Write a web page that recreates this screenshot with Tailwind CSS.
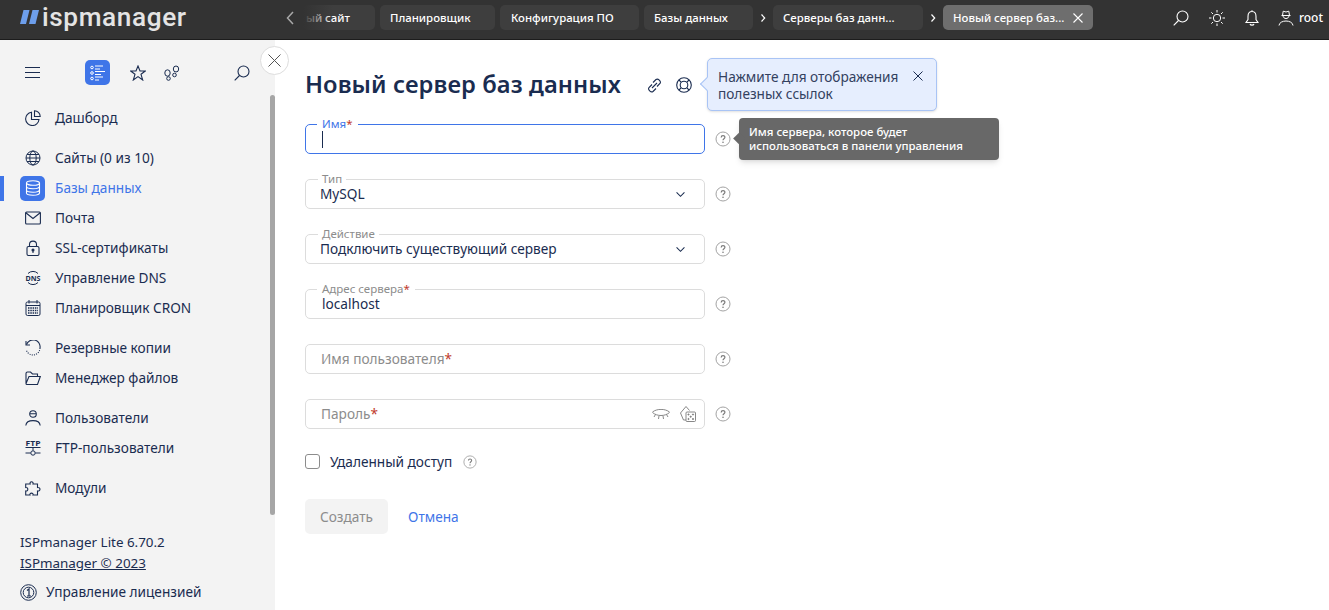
<!DOCTYPE html>
<html lang="ru">
<head>
    <meta charset="UTF-8">
    <title>Новый сервер баз данных</title>
    <script src="https://cdn.jsdelivr.net/npm/@tailwindcss/browser@4"></script>
</head>
<body class="h-[610px] w-[1329px] overflow-hidden bg-white font-['Noto_Sans',sans-serif] text-[13.65px] text-[#1a2c50]">
    <svg class="hidden">
        <symbol id="help" viewBox="0 0 16 16">
            <circle cx="8" cy="8" r="7" fill="none" stroke="#a3a3a3" stroke-width="1"/>
            <path d="M6.2 6.4C6.2 4 9.9 4 9.9 6.3C9.9 7.7 8 7.7 8 9.3" fill="none" stroke="#7a7a7a" stroke-width="1.2"/>
            <circle cx="8" cy="11.3" r=".8" fill="#7a7a7a"/>
        </symbol>
        <symbol id="chev" viewBox="0 0 12 8">
            <path d="M1.5 1.5L6 6L10.5 1.5" fill="none" stroke="#1a2c50" stroke-width="1.2"/>
        </symbol>
    </svg>

    <header class="flex h-10 items-center border-b border-[#1c1c1c] bg-[#333333] pb-1 text-white">
        <div class="flex w-[279px] shrink-0 items-center pl-5">
            <svg width="20" height="14" viewBox="0 0 20 14"><path d="M3.5 0H9.5L6 14H0ZM12.5 0H19L15.5 14H9Z" fill="#6d9eeb"/></svg>
            <span class="ml-[2px] font-['Roboto',sans-serif] text-[26.2px] leading-none font-medium tracking-[.6px] text-[#e4e4e4]">ispmanager</span>
        </div>
        <svg class="mr-[9px] ml-[7px] shrink-0" width="8" height="14" viewBox="0 0 8 14"><path d="M7 1L1.500 7L7 13" fill="none" stroke="#a8a8a8" stroke-width="1.500"/></svg>
        <nav class="relative flex w-[800px] items-center overflow-hidden text-[11.4px] font-medium">
            <div class="absolute top-0 left-0 h-full w-[30px] bg-gradient-to-r from-[#333333] to-transparent"></div>
            <span class="h-[25px] w-[72px] shrink-0 rounded-[5px] bg-[#3e3e3e] pr-[25px] text-right leading-[25px] whitespace-nowrap">ый сайт</span>
            <span class="ml-[5px] h-[25px] w-[115px] shrink-0 rounded-[5px] bg-[#3e3e3e] pl-[10px] leading-[25px]">Планировщик</span>
            <span class="ml-[5px] h-[25px] w-[139px] shrink-0 rounded-[5px] bg-[#3e3e3e] pl-[11px] leading-[25px]">Конфигурация ПО</span>
            <span class="ml-[5px] h-[25px] w-[109px] shrink-0 rounded-[5px] bg-[#3e3e3e] pl-[10px] leading-[25px]">Базы данных</span>
            <svg class="mx-[7px] shrink-0" width="6" height="8" viewBox="0 0 6 8"><path d="M1.500 .5L4.700 4L1.500 7.500" fill="none" stroke="#ffffff" stroke-width="1.200"/></svg>
            <span class="h-[25px] w-[150px] shrink-0 rounded-[5px] bg-[#3e3e3e] pl-[10px] leading-[25px]">Серверы баз данн...</span>
            <svg class="mx-[7px] shrink-0" width="6" height="8" viewBox="0 0 6 8"><path d="M1.500 .5L4.700 4L1.500 7.500" fill="none" stroke="#ffffff" stroke-width="1.200"/></svg>
            <span class="flex h-[25px] w-[150px] shrink-0 items-center justify-between rounded-[5px] bg-[#6e6e6e] px-[10px] whitespace-nowrap">Новый сервер баз...
                <svg width="10" height="10" viewBox="0 0 10 10"><path d="M.5 .5L9.500 9.500M9.500 .5L.5 9.500" stroke="#ffffff" stroke-width="1.100"/></svg>
            </span>
        </nav>
        <div class="ml-auto flex items-center pr-[6px] text-[12px] font-medium">
            <svg width="16" height="16" viewBox="0 0 16 16" fill="none" stroke="#ffffff" stroke-width="1.100"><circle cx="9.500" cy="6.500" r="5.500"/><path d="M5.500 10.500L.7 15.300"/></svg>
            <svg class="ml-5" width="16" height="16" viewBox="0 0 16 16" fill="none" stroke="#ffffff" stroke-width="1"><circle cx="8" cy="8" r="3.700"/><path d="M8 0V2.500M8 13.500V16M0 8H2.500M13.500 8H16M2.300 2.300L4 4M12 12L13.700 13.700M2.300 13.700L4 12M12 4L13.700 2.300"/></svg>
            <svg class="ml-[20px]" width="14" height="16" viewBox="0 0 14 16" fill="none" stroke="#ffffff" stroke-width="1.100"><path d="M7 1.500C3.800 1.500 3 4 3 6.500V9.500L1 12.500H13L11 9.500V6.500C11 4 10.200 1.500 7 1.500ZM7 .2V1.500M5 14C5.500 15.500 8.500 15.500 9 14"/></svg>
            <svg class="ml-[19px]" width="16" height="16" viewBox="0 0 16 16" fill="none" stroke="#ffffff" stroke-width="1"><path d="M4.500 5.500L5.200 1.200L8 2L10.800 1.200L11.500 5.500ZM3.500 5.500H12.500M5 5.500C5 9.500 11 9.500 11 5.500M1 15.500C1.500 9.500 14.500 9.500 15 15.500"/></svg>
            <span class="ml-[5px]">root</span>
        </div>
    </header>

    <div class="flex h-[570px]">
        <aside class="relative flex w-[275px] shrink-0 flex-col bg-[#f3f3f3]">
            <div class="absolute top-[55px] right-0 h-[420px] w-[5px] rounded-full bg-[#a6a6a6]"></div>
            <button class="absolute top-[6px] -right-[14px] z-10 flex h-[29px] w-[29px] items-center justify-center rounded-full border border-[#dddddd] bg-white">
                <svg width="13" height="13" viewBox="0 0 13 13"><path d="M.5 .5L12.500 12.500M12.500 .5L.5 12.500" stroke="#555555" stroke-width="1"/></svg>
            </button>

            <div class="mt-5 flex h-[25px] items-center pl-[25px]">
                <svg width="15" height="11" viewBox="0 0 15 11"><path d="M0 .5H15M0 5.500H15M0 10.500H15" stroke="#1a2c50" stroke-width="1"/></svg>
                <span class="ml-[45px] flex h-[25px] w-[25px] items-center justify-center rounded-[5px] bg-[#3f75e8]">
                    <svg width="16" height="16" viewBox="0 0 16 16" fill="none" stroke="#ffffff" stroke-width="1"><circle cx="2" cy="2.500" r="1.300"/><circle cx="2" cy="8" r="1.300"/><circle cx="2" cy="13.500" r="1.300"/><path d="M5 1H13M5 4H10M5 6.500H15M5 9.500H11M5 12H13M5 15H9"/></svg>
                </span>
                <svg class="ml-[20px]" width="16" height="16" viewBox="0 0 16 16" fill="none" stroke="#1a2c50" stroke-width="1.100"><path d="M8 1L10 6H15.300L11 9.300L12.700 15L8 11.600L3.300 15L5 9.300L.7 6H6Z"/></svg>
                <svg class="ml-[18px]" width="16" height="16" viewBox="0 0 16 16" fill="none" stroke="#1a2c50" stroke-width="1"><ellipse cx="3.500" cy="8" rx="2.700" ry="3.200"/><circle cx="4.500" cy="13.500" r="1.800"/><ellipse cx="12" cy="4" rx="2.700" ry="3"/><circle cx="10.500" cy="10" r="1.800"/></svg>
                <svg class="ml-[54px]" width="16" height="16" viewBox="0 0 16 16" fill="none" stroke="#1a2c50" stroke-width="1.100"><circle cx="9.500" cy="6.500" r="5.500"/><path d="M5.500 10.500L.7 15.300"/></svg>
            </div>

            <ul class="mt-[18px]">
                <li class="flex h-[30px] items-center pl-[25px]">
                    <svg width="16" height="16" viewBox="0 0 16 16" fill="none" stroke="#1a2c50" stroke-width="1.100"><path d="M6.500 2.200A6.700 6.700 0 1 0 14 9.500H6.500ZM9.500 .8V6.500H15.200A5.700 5.700 0 0 0 9.500 .8Z"/></svg>
                    <span class="ml-[14px] leading-[20px]">Дашборд</span>
                </li>
                <li class="mt-[10px] flex h-[30px] items-center pl-[25px]">
                    <svg width="16" height="16" viewBox="0 0 16 16" fill="none" stroke="#1a2c50" stroke-width="1"><circle cx="8" cy="8" r="7"/><ellipse cx="8" cy="8" rx="3.200" ry="7"/><path d="M1 8H15M2 4.500H14M2 11.500H14"/></svg>
                    <span class="ml-[14px] leading-[20px]">Сайты (0 из 10)</span>
                </li>
                <li class="relative flex h-[30px] items-center pl-5 text-[#3f75e8]">
                    <span class="absolute left-0 h-[25px] w-1 bg-[#3f75e8]"></span>
                    <span class="flex h-[25px] w-[25px] items-center justify-center rounded-[5px] bg-[#3f75e8]">
                        <svg width="16" height="16" viewBox="0 0 16 16" fill="none" stroke="#ffffff" stroke-width="1.100"><ellipse cx="8" cy="3" rx="6.500" ry="2.300"/><path d="M1.500 3V13C1.500 16 14.500 16 14.500 13V3M1.500 6.500C1.500 9.500 14.500 9.500 14.500 6.500M1.500 10C1.500 13 14.500 13 14.500 10"/></svg>
                    </span>
                    <span class="ml-[10px] leading-[20px]">Базы данных</span>
                </li>
                <li class="flex h-[30px] items-center pl-[25px]">
                    <svg width="16" height="16" viewBox="0 0 16 16" fill="none" stroke="#1a2c50" stroke-width="1.100"><rect x=".6" y="2" width="14.800" height="12" rx="1"/><path d="M.8 2.800L8 8.500L15.200 2.800"/></svg>
                    <span class="ml-[14px] leading-[20px]">Почта</span>
                </li>
                <li class="flex h-[30px] items-center pl-[25px]">
                    <svg width="16" height="16" viewBox="0 0 16 16" fill="none" stroke="#1a2c50" stroke-width="1.100"><rect x="2" y="6.500" width="12" height="9" rx="1.500"/><path d="M4.500 6.500V4.500C4.500 0 11.500 0 11.500 4.500V6.500M8 10.500V13"/><circle cx="8" cy="10" r="1" fill="#1a2c50"/></svg>
                    <span class="ml-[14px] leading-[20px]">SSL-сертификаты</span>
                </li>
                <li class="flex h-[30px] items-center pl-[25px]">
                    <svg width="16" height="16" viewBox="0 0 16 16" fill="none"><path d="M3 3.500A7 7 0 0 1 13 3.500M3 12.500A7 7 0 0 0 13 12.500" stroke="#1a2c50" stroke-width="1"/><text x=".5" y="10.500" textLength="15" lengthAdjust="spacingAndGlyphs" font-family="Noto Sans" font-weight="700" font-size="7" fill="#1a2c50">DNS</text></svg>
                    <span class="ml-[14px] leading-[20px]">Управление DNS</span>
                </li>
                <li class="flex h-[30px] items-center pl-[25px]">
                    <svg width="16" height="16" viewBox="0 0 16 16" fill="none" stroke="#1a2c50" stroke-width="1"><rect x="1" y="2" width="14" height="13.500" rx="1.500"/><path d="M4 0V3.500M12 0V3.500M1 5.500H15"/><path d="M3 8H13M3 10.500H13M3 13H13" stroke-width="1.500" stroke-dasharray="1.500 .8"/></svg>
                    <span class="ml-[14px] leading-[20px]">Планировщик CRON</span>
                </li>
                <li class="mt-[10px] flex h-[30px] items-center pl-[25px]">
                    <svg width="16" height="16" viewBox="0 0 16 16" fill="none" stroke="#1a2c50" stroke-width="1.100"><path d="M1.500 4.500A7 7 0 0 1 15 8" /><path d="M15 8A7 7 0 0 1 1.300 10" stroke-dasharray="1 1.200"/><path d="M1 1V5H5"/></svg>
                    <span class="ml-[14px] leading-[20px]">Резервные копии</span>
                </li>
                <li class="flex h-[30px] items-center pl-[25px]">
                    <svg width="16" height="16" viewBox="0 0 16 16" fill="none" stroke="#1a2c50" stroke-width="1.100"><path d="M1 13.500V3.500C1 2.500 1.500 2 2.500 2H5.500L7.500 4H12.500V6.500M1 13.500C1 14 1.500 14.500 2 14.500H12.500L15.300 6.500H4L1 13.500Z"/></svg>
                    <span class="ml-[14px] leading-[20px]">Менеджер файлов</span>
                </li>
                <li class="mt-[10px] flex h-[30px] items-center pl-[25px]">
                    <svg width="16" height="16" viewBox="0 0 16 16" fill="none" stroke="#1a2c50" stroke-width="1.100"><circle cx="8" cy="4" r="3.300"/><path d="M5 3.800H11M.8 15.500C1.500 9 14.500 9 15.200 15.500"/></svg>
                    <span class="ml-[14px] leading-[20px]">Пользователи</span>
                </li>
                <li class="flex h-[30px] items-center pl-[25px]">
                    <svg width="16" height="16" viewBox="0 0 16 16" fill="none"><text x=".5" y="5.500" textLength="15" lengthAdjust="spacingAndGlyphs" font-family="Noto Sans" font-weight="700" font-size="7" fill="#1a2c50">FTP</text><path d="M.5 7.500H15.500M8 7.500V10.500M.5 13H5.700M10.300 13H15.500" stroke="#1a2c50" stroke-width="1"/><circle cx="8" cy="13" r="2.200" stroke="#1a2c50" stroke-width="1"/></svg>
                    <span class="ml-[14px] leading-[20px]">FTP-пользователи</span>
                </li>
                <li class="mt-[10px] flex h-[30px] items-center pl-[25px]">
                    <svg width="16" height="16" viewBox="0 0 16 16" fill="none" stroke="#1a2c50" stroke-width="1.100"><path d="M.7 4H5.200C4 1 9 1 8 4H12.500V7.500C15.800 7 15.800 11.500 12.500 11V15H8C9 12.500 4 12.500 5 15H.7V11C3.500 11.500 3.500 7 .7 7.500Z"/></svg>
                    <span class="ml-[14px] leading-[20px]">Модули</span>
                </li>
            </ul>

            <div class="mt-[29px] pl-5 text-[13.4px] leading-[21px]">
                <p>ISPmanager Lite 6.70.2</p>
                <p class="underline">ISPmanager © 2023</p>
            </div>
            <div class="mt-[8px] flex items-center pl-5">
                <svg width="17" height="17" viewBox="0 0 17 17" fill="none" stroke="#1a2c50" stroke-width="1"><circle cx="8.500" cy="8.500" r="7.800"/><circle cx="8.500" cy="8.500" r="5.300"/><path d="M7 6.500L9 5V12M7 12H11" stroke-width="1.200"/></svg>
                <span class="ml-[9px]">Управление лицензией</span>
            </div>
        </aside>

        <main class="relative flex-1 pt-[30px] pl-[30px]">
            <div class="flex h-[30px] items-center">
                <h1 class="pb-[2px] text-[23.7px] leading-[30px] font-semibold tracking-[.1px] text-[#1a2c50]">Новый сервер баз данных</h1>
                <svg class="ml-[26px]" width="15" height="15" viewBox="0 0 15 15" fill="none" stroke="#1a2c50" stroke-width="1.100"><path d="M6 4.500L9 1.500C11 0 14.500 3.500 13 5.500L10 8.500M9 10.500L6 13.500C4 15 .5 11.500 2 9.500L5 6.500M5 10L10 5"/></svg>
                <svg class="ml-[14px]" width="16" height="16" viewBox="0 0 16 16" fill="none" stroke="#1a2c50" stroke-width="1.100"><circle cx="8" cy="8" r="7.300"/><circle cx="8" cy="8" r="3.800"/><path d="M3 3L5.300 5.300M13 3L10.700 5.300M3 13L5.300 10.700M13 13L10.700 10.700"/></svg>
            </div>

            <div class="absolute top-[18px] left-[432px] h-[53px] w-[230px] rounded-[5px] border border-[#a9c4f5] bg-[#e6eefe] py-[3px] pl-[10px] text-[13.65px] leading-[17px] text-[#33415f] shadow-sm">
                <span class="absolute top-[20px] -left-[6px] h-[10px] w-[10px] rotate-45 border-b border-l border-[#a9c4f5] bg-[#e6eefe]"></span>
                <p class="mt-[6px]">Нажмите для отображения</p>
                <p>полезных ссылок</p>
                <svg class="absolute top-[12px] right-[13px]" width="10" height="10" viewBox="0 0 10 10"><path d="M.5 .5L9.500 9.500M9.500 .5L.5 9.500" stroke="#1a2c50" stroke-width="1"/></svg>
            </div>

            <form class="mt-[24px] flex w-[440px] flex-col gap-[25px]">
                <div class="flex items-center">
                    <div class="relative flex h-[30px] w-[400px] items-center rounded-[5px] border border-[#3f75e8] pl-4">
                        <span class="absolute -top-[7px] left-[11px] bg-white px-[5px] text-[11.500px] leading-[12px] text-[#3f75e8]">Имя<span class="text-[#c0392b]">*</span></span>
                        <span class="h-[17px] w-px bg-[#1a2c50]"></span>
                    </div>
                    <svg class="ml-[10px]" width="16" height="16"><use href="#help"/></svg>
                    <div class="absolute top-[78px] left-[464px] h-[42px] w-[260px] rounded-[4px] bg-[#686868] py-[7px] pl-[10px] text-[11.43px] leading-[14px] font-medium text-white shadow-md">
                        <span class="absolute top-[16px] -left-[4px] h-[9px] w-[9px] rotate-45 bg-[#686868]"></span>
                        <p>Имя сервера, которое будет</p>
                        <p>использоваться в панели управления</p>
                    </div>
                </div>
                <div class="flex items-center">
                    <div class="relative flex h-[30px] w-[400px] items-center justify-between rounded-[5px] border border-[#dcdcdc] pr-[18px] pl-[14px]">
                        <span class="absolute -top-[7px] left-3 bg-white px-[4px] text-[11.500px] leading-[12px] text-[#8c8c8c]">Тип</span>
                        <span class="leading-[16px]">MySQL</span>
                        <svg width="11" height="7"><use href="#chev"/></svg>
                    </div>
                    <svg class="ml-[10px]" width="16" height="16"><use href="#help"/></svg>
                </div>
                <div class="flex items-center">
                    <div class="relative flex h-[30px] w-[400px] items-center justify-between rounded-[5px] border border-[#dcdcdc] pr-[18px] pl-[14px]">
                        <span class="absolute -top-[7px] left-3 bg-white px-[4px] text-[11.500px] leading-[12px] text-[#8c8c8c]">Действие</span>
                        <span class="leading-[16px]">Подключить существующий сервер</span>
                        <svg width="11" height="7"><use href="#chev"/></svg>
                    </div>
                    <svg class="ml-[10px]" width="16" height="16"><use href="#help"/></svg>
                </div>
                <div class="flex items-center">
                    <div class="relative flex h-[30px] w-[400px] items-center rounded-[5px] border border-[#dcdcdc] pl-[16px]">
                        <span class="absolute -top-[7px] left-[11px] bg-white px-[5px] text-[11.500px] leading-[12px] text-[#8c8c8c]">Адрес сервера<span class="text-[#c0392b]">*</span></span>
                        <span class="leading-[16px]">localhost</span>
                    </div>
                    <svg class="ml-[10px]" width="16" height="16"><use href="#help"/></svg>
                </div>
                <div class="flex items-center">
                    <div class="flex h-[30px] w-[400px] items-center rounded-[5px] border border-[#dcdcdc] pl-[15px] text-[#8c8c8c]">
                        <span class="leading-[16px]">Имя пользователя<span class="text-[#c0392b]">*</span></span>
                    </div>
                    <svg class="ml-[10px]" width="16" height="16"><use href="#help"/></svg>
                </div>
                <div class="flex items-center">
                    <div class="flex h-[30px] w-[400px] items-center rounded-[5px] border border-[#dcdcdc] pr-[8px] pl-[15px] text-[#8c8c8c]">
                        <span class="leading-[16px]">Пароль<span class="text-[#c0392b]">*</span></span>
                        <svg class="ml-auto" width="18" height="11" viewBox="0 0 18 11" fill="none" stroke="#7a7a7a" stroke-width=".9"><path d="M.5 3C5 -.5 13 -.5 17.500 3M.5 3.500C5 7.500 13 7.500 17.500 3.500M3.500 5.500L2 8M7 6.800L6.500 10M11 6.800L11.500 10M14.500 5.500L16 8"/></svg>
                        <svg class="ml-[10px]" width="16" height="16" viewBox="0 0 16 16" fill="none" stroke="#7a7a7a" stroke-width=".9"><path d="M6 14H3.500L.5 7L6 .5L9.500 4.500"/><rect x="6" y="6" width="9.500" height="9.500" rx="1"/><circle cx="8.500" cy="8.500" r=".6" fill="#7a7a7a"/><circle cx="13" cy="8.500" r=".6" fill="#7a7a7a"/><circle cx="10.700" cy="10.700" r=".6" fill="#7a7a7a"/><circle cx="8.500" cy="13" r=".6" fill="#7a7a7a"/><circle cx="13" cy="13" r=".6" fill="#7a7a7a"/></svg>
                    </div>
                    <svg class="ml-[10px]" width="16" height="16"><use href="#help"/></svg>
                </div>
                <label class="flex h-[15px] items-center">
                    <span class="h-[15px] w-[15px] rounded-[3px] border border-[#8c8c8c] bg-white"></span>
                    <span class="ml-[10px] leading-[16px]">Удаленный доступ</span>
                    <svg class="ml-[11px]" width="14" height="14"><use href="#help"/></svg>
                </label>
                <div class="mt-[5px] flex items-center">
                    <span class="flex h-[35px] w-[83px] items-center justify-center rounded-[5px] bg-[#f3f3f3] pt-px text-[#8c8c8c]">Создать</span>
                    <a href="#" class="mt-px ml-5 text-[#3f75e8]">Отмена</a>
                </div>
            </form>
        </main>
    </div>
</body>
</html>
